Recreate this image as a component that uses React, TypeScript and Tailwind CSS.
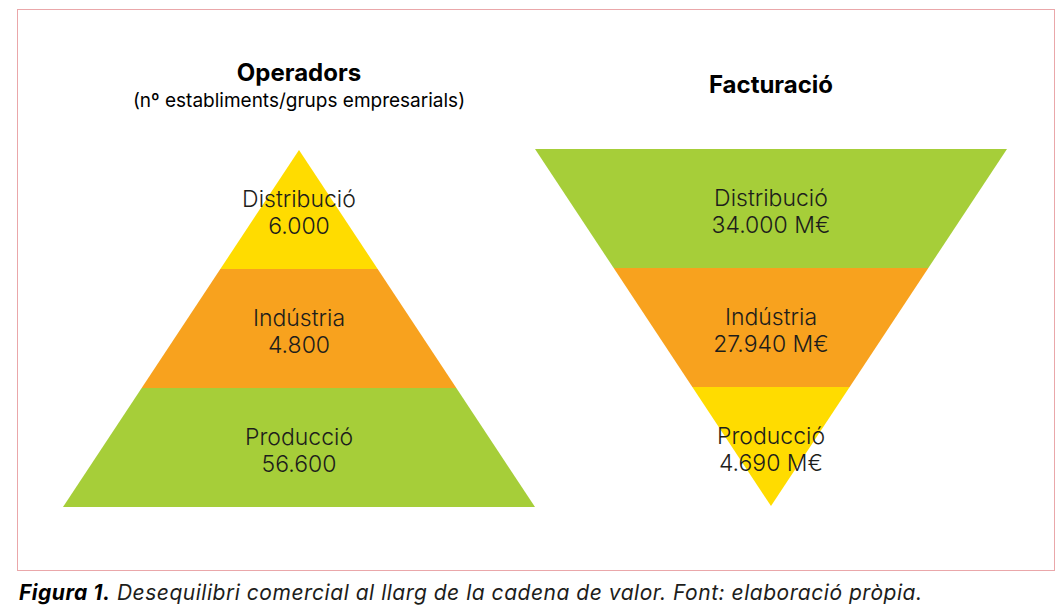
import React from 'react'

const YELLOW = '#ffdc00'
const ORANGE = '#f8a21e'
const GREEN = '#a6ce39'

type Band = { label: string; value: string; color: string }

const operadors: Band[] = [
  { label: 'Distribució', value: '6.000', color: YELLOW },
  { label: 'Indústria', value: '4.800', color: ORANGE },
  { label: 'Producció', value: '56.600', color: GREEN },
]

const facturacio: Band[] = [
  { label: 'Distribució', value: '34.000 M€', color: GREEN },
  { label: 'Indústria', value: '27.940 M€', color: ORANGE },
  { label: 'Producció', value: '4.690 M€', color: YELLOW },
]

// 472 x 357, three bands of equal height
function Pyramid({ bands, inverted }: { bands: Band[]; inverted?: boolean }) {
  const w = 472
  const h = 357
  const bh = h / 3
  const half = (y: number) => (inverted ? ((h - y) / h) * (w / 2) : (y / h) * (w / 2))
  const c = w / 2

  return (
    <div className="relative w-[472px] h-[357px]">
      <svg className="absolute inset-0" width={w} height={h} viewBox={`0 0 ${w} ${h}`}>
        {bands.map((b, i) => {
          const y0 = i * bh
          const y1 = (i + 1) * bh
          const pts = [
            [c - half(y0), y0],
            [c + half(y0), y0],
            [c + half(y1), y1],
            [c - half(y1), y1],
          ]
          return <polygon key={i} points={pts.map((p) => p.join(',')).join(' ')} fill={b.color} />
        })}
      </svg>
      <div className="relative flex flex-col">
        {bands.map((b) => (
          <div
            key={b.label}
            className="h-[119px] pt-[6px] flex flex-col items-center justify-center text-[23px] leading-[27px] font-light text-[#1d1d1b]"
          >
            <span>{b.label}</span>
            <span>{b.value}</span>
          </div>
        ))}
      </div>
    </div>
  )
}

export default function App() {
  return (
    <div className="w-[1064px] h-[616px] bg-white overflow-hidden font-['Inter','Liberation_Sans',sans-serif] text-black">
      <div className="ml-[17px] mt-[9px] w-[1038px] h-[562px] border border-[#eaa7aa]">
        <div className="flex pl-[45px]">
          <div className="w-[472px] flex flex-col items-center">
            <div className="h-[140px] pt-[49px] flex flex-col items-center">
              <h2 className="text-[24px] leading-[28px] font-bold">Operadors</h2>
              <p className="mt-[2px] text-[19px] leading-[24px]">(nº establiments/grups empresarials)</p>
            </div>
            <Pyramid bands={operadors} />
          </div>
          <div className="w-[472px] flex flex-col items-center">
            <div className="h-[139px] pt-[61px] flex flex-col items-center">
              <h2 className="text-[24px] leading-[28px] font-bold">Facturació</h2>
            </div>
            <Pyramid bands={facturacio} inverted />
          </div>
        </div>
      </div>
      <p className="ml-[19px] mt-[9px] text-[21px] leading-[26px] tracking-[0.025em] italic text-[#1d1d1b]">
        <span className="font-bold text-black">Figura 1.</span> Desequilibri comercial al llarg de la cadena de valor.
        Font: elaboració pròpia.
      </p>
    </div>
  )
}
